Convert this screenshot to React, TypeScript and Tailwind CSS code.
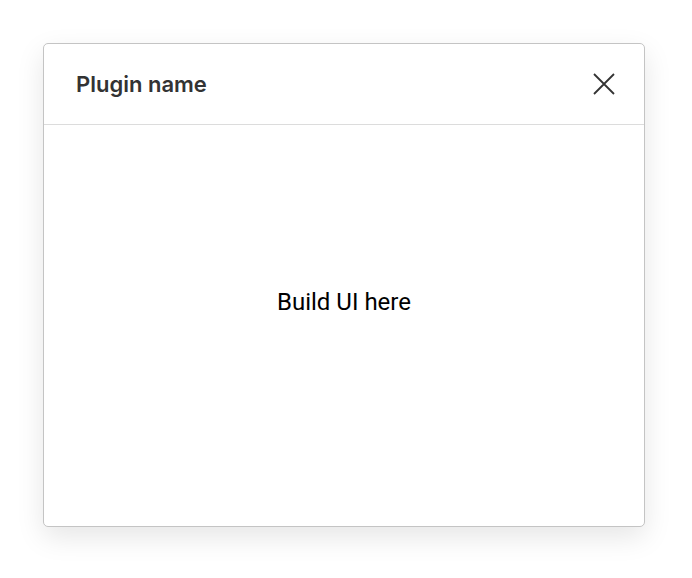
export default function App() {
  return (
    <div className="min-h-[578px] bg-white pl-[43px] pt-[43px]">
      <div className="flex h-[484px] w-[602px] flex-col rounded-[5px] border border-[#c4c4c4] bg-white shadow-[0_10px_28px_rgba(0,0,0,0.10)]">
        <div className="flex h-[81px] shrink-0 items-center justify-between border-b border-[#dcdcdc] pl-[32px] pr-[29px]">
          <h1 className="font-['Inter',sans-serif] text-[22px] font-semibold text-[#333333]">
            Plugin name
          </h1>
          <button aria-label="Close" className="flex h-[22px] w-[22px] items-center justify-center text-[#333333]">
            <svg width="22" height="22" viewBox="0 0 22 22" fill="none">
              <path d="M1 1L21 21M21 1L1 21" stroke="currentColor" strokeWidth="1.8" />
            </svg>
          </button>
        </div>
        <div className="flex flex-1 items-start justify-center pt-[159px]">
          <p className="font-['Roboto',sans-serif] text-[24px] text-black">Build UI here</p>
        </div>
      </div>
    </div>
  );
}
